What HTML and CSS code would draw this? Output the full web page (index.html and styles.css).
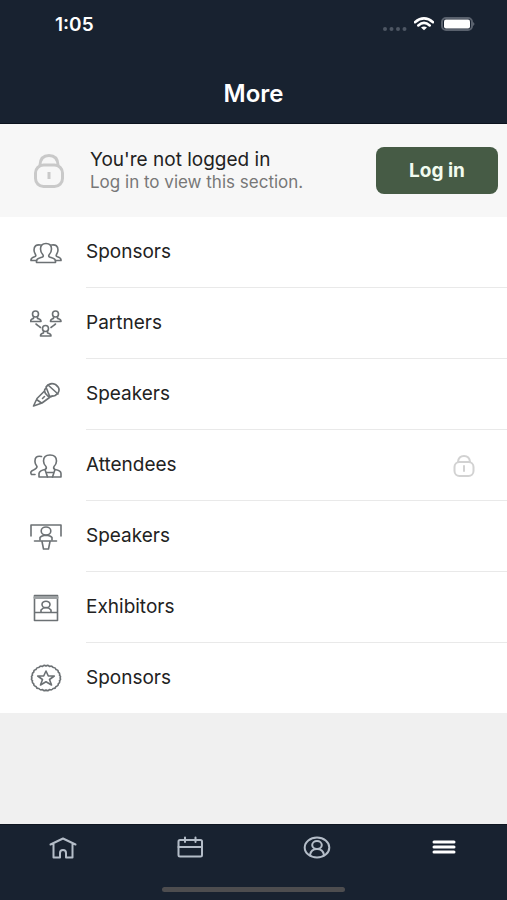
FILE: index.html
```html
<!DOCTYPE html>
<html lang="en">
<head>
    <meta charset="UTF-8">
    <title>More</title>
    <meta name="viewport" content="width=device-width, initial-scale=1.0">
    <link rel="stylesheet" href="styles.css">
</head>
<body>
    <header class="header">
        <div class="status-bar">
            <span class="time">1:05</span>
            <div class="status-icons">
                <svg class="signal" width="24" height="4" viewBox="0 0 24 4">
                    <circle cx="2" cy="2" r="2"/><circle cx="8.500" cy="2" r="2"/><circle cx="15" cy="2" r="2"/><circle cx="21.500" cy="2" r="2"/>
                </svg>
                <svg width="20" height="14" viewBox="0 0 20 14" stroke="#fff" stroke-width="2.600">
                    <path d="M1 5.200Q10-2.400 19 5.200M4.300 8.400Q10 3.500 15.700 8.400"/>
                    <path d="M7 10.500Q10 8.500 13 10.500L10 13.200z" fill="#fff" stroke="none"/>
                </svg>
                <svg width="34" height="14" viewBox="0 0 34 14">
                    <rect x="1" y="1" width="30" height="12" rx="4" stroke="#59616d" stroke-width="2"/>
                    <rect x="3" y="2.500" width="26" height="9" rx="2" fill="#fff"/>
                    <path d="M32 5v4q3-2 0-4" fill="#59616d"/>
                </svg>
            </div>
        </div>
        <h1>More</h1>
    </header>

    <main>
        <!-- Login banner -->
        <section class="login">
            <svg class="lock-icon" width="32" height="36" viewBox="0 0 32 36">
                <path d="M7 12q.500-9.500 9-9.500t9 9.500"/>
                <rect x="2.500" y="12" width="27" height="21.500" rx="8"/>
                <path d="M16 19v7" stroke-linecap="butt"/>
            </svg>
            <div class="login-text">
                <h2>You're not logged in</h2>
                <p>Log in to view this section.</p>
            </div>
            <button type="button" class="login-button">Log in</button>
        </section>

        <!-- Menu -->
        <nav class="menu">
            <a href="#sponsors" class="menu-item">
                <svg class="menu-icon" viewBox="0 0 32 28">
                    <path d="M6.500 23.500q-.500-3.500 3-4.500l3-1q1.500-1 .200-2.500Q10.500 13 10.500 10q0-5.500 5.500-5.500t5.500 5.500q0 3-2.200 5.500-1.300 1.500.200 2.500l3 1q3.500 1 3 4.500z"/>
                    <path d="M10.500 6Q4 5 4 11q0 2 1.500 4.500 1 1.500-1 2.200Q.500 19 1 21.500h5M21.500 6Q28 5 28 11q0 2-1.500 4.500-1 1.500 1 2.200 4 1.300 3.500 3.800h-5"/>
                </svg>
                <span class="menu-label">Sponsors</span>
            </a>
            <a href="#partners" class="menu-item">
                <svg class="menu-icon" viewBox="0 0 32 28">
                    <g id="person">
                        <circle cx="5.500" cy="4" r="3"/>
                        <path d="M3.500 6.500v2Q.500 9 .500 11.500h10.500Q11 9 7.500 8.500v-2"/>
                    </g>
                    <use href="#person" x="20"/>
                    <use href="#person" x="10" y="14.500"/>
                    <path d="M6 14l4.500 3.500M25.500 14L21 17.500" stroke-dasharray="2.500 1"/>
                </svg>
                <span class="menu-label">Partners</span>
            </a>
            <a href="#speakers" class="menu-item">
                <svg class="menu-icon" viewBox="0 0 32 28">
                    <path d="M16 6Q20 1 25.500 3.500 31 7.500 28 12q-3 4-8.500 3z"/>
                    <path d="M18 4l10 9M15.500 7.500q-2 2 0 5t5 3.500l2-1M14.500 10L7 17.500 3.500 25l8.500-3 7.500-5.500M6.500 18.500l5 3.500M12.500 17.500l2-2"/>
                </svg>
                <span class="menu-label">Speakers</span>
            </a>
            <a href="#attendees" class="menu-item">
                <svg class="menu-icon" viewBox="0 0 32 28">
                    <path d="M13.500 9q0-6 6.500-6t6.500 6q0 3-2.500 5.500-1 2 1 3 6 1 6 4V25H9v-3.500q.500-3 6-4 2-1 1-3Q13.500 12 13.500 9z"/>
                    <path d="M15 17.500l2.500 7.500M25 17.500L22.500 25M16 20.500h8"/>
                    <path d="M11.500 4.500Q4.500 3 5 10q0 2 2 4.500 0 2-3.500 3.500-4 1.500-2 4.500H5"/>
                </svg>
                <span class="menu-label">Attendees</span>
                <svg class="lock-icon row-lock" width="22" height="24" viewBox="0 0 22 24">
                    <path d="M5 8q.500-6 6-6t6 6"/>
                    <rect x="1.500" y="8" width="19" height="14" rx="5"/>
                    <path d="M11 12v5"/>
                </svg>
            </a>
            <a href="#sessions" class="menu-item">
                <svg class="menu-icon" viewBox="0 0 32 28">
                    <path d="M1 13V2h30v11M4.500 18h22"/>
                    <ellipse cx="16" cy="8" rx="4.800" ry="4"/>
                    <path d="M10 17v-2.500q1-1.500 4-2h4q3 .500 4 2V17M12 18.500l1.500 7.500h5l1.500-7.500"/>
                </svg>
                <span class="menu-label">Speakers</span>
            </a>
            <a href="#exhibitors" class="menu-item">
                <svg class="menu-icon" viewBox="0 0 32 28">
                    <path d="M4.500 1.500h23v25h-23zM4.500 18.500h23"/>
                    <path d="M5 3.500h22" stroke="#9da1a3" stroke-width="3"/>
                    <ellipse cx="16" cy="10.500" rx="4" ry="3.300"/>
                    <path d="M11 18v-2q2-2.500 5-2.500t5 2.500v2"/>
                </svg>
                <span class="menu-label">Exhibitors</span>
            </a>
            <a href="#sponsor-levels" class="menu-item">
                <svg class="menu-icon" viewBox="0 0 32 28">
                    <path d="M16 2q2-1.500 3.500.500 2.500-1 3.500 1 2.500-.300 3 2 2.500.500 2.300 2.800 2 1 1.200 3 1.800 1.200.500 2.700 1.300 1.500-.500 2.700.800 2-1.200 3 .200 2.300-2.300 2.800-.500 2.300-3 2-1 2-3.500 1-1.500 2-3.500.500-2 1.500-3.500-.500-2.500 1-3.500-1-2.500.300-3-2-2.500-.500-2.300-2.800-2-1-1.200-3-1.800-1.200-.500-2.700-1.300-1.500.500-2.700-.800-2 1.200-3-.200-2.300 2.300-2.800.500-2.300 3-2 1-2 3.500-1Q14 .500 16 2z"/>
                    <path d="M16 7l2.300 5h6l-4.800 3.500 2 5.500-5.500-3.300L10.500 21l2-5.500L7.700 12h6z"/>
                </svg>
                <span class="menu-label">Sponsors</span>
            </a>
        </nav>
    </main>

    <!-- Tab bar -->
    <footer class="tab-bar">
        <nav class="tabs">
            <a href="#home" aria-label="Home">
                <svg width="28" height="24" viewBox="0 0 28 24">
                    <path d="M1.500 8.500L14 2.500l12.500 6M4.500 8v13.500H11V17q0-3 3-3t3 3v4.500h6.500V8"/>
                </svg>
            </a>
            <a href="#schedule" aria-label="Schedule">
                <svg width="28" height="24" viewBox="0 0 28 24">
                    <rect x="2.500" y="4" width="23.500" height="16.500" rx="1.500"/>
                    <path d="M2.500 11H26M9 1.500V6M19.500 1.500V6"/>
                </svg>
            </a>
            <a href="#profile" aria-label="Profile">
                <svg width="28" height="24" viewBox="0 0 28 24">
                    <ellipse cx="14" cy="11.500" rx="12.300" ry="10"/>
                    <ellipse cx="14" cy="9" rx="4.800" ry="4"/>
                    <path d="M7 19q1-6 7-6t7 6"/>
                </svg>
            </a>
            <a href="#more" aria-label="More" class="active">
                <svg width="28" height="24" viewBox="0 0 28 24">
                    <path d="M4 6h20M4 11h20M4 16h20"/>
                </svg>
            </a>
        </nav>
        <div class="home-indicator"></div>
    </footer>
</body>
</html>
```
FILE: styles.css
```css
* {
    margin: 0;
    padding: 0;
    box-sizing: border-box;
}

body {
    min-height: 100vh;
    display: flex;
    flex-direction: column;
    background: #f0f0f0;
    color: #222;
    font-family: Inter, "Liberation Sans", sans-serif;
}

svg {
    display: block;
    flex: none;
    fill: none;
    stroke-linecap: round;
    stroke-linejoin: round;
}

/* Header */
.header {
    background: #182230;
    color: #fff;
    border-bottom: 1px solid #0b121d;
}

.status-bar {
    display: flex;
    justify-content: space-between;
    align-items: center;
    height: 48px;
    padding: 0 32px 0 55px;
}

.time {
    font-size: 19px;
    font-weight: 600;
}

.status-icons {
    display: flex;
    align-items: center;
    gap: 7px;
}

.signal {
    margin-top: 9px;
    fill: #4d5663;
}

h1 {
    padding: 32px 0 15px;
    font-size: 24px;
    font-weight: 600;
    line-height: 28px;
    text-align: center;
}

/* Login banner */
.login {
    display: flex;
    align-items: center;
    padding: 23px 9px 23px 33px;
    background: #f7f7f7;
}

.lock-icon {
    stroke: #c9c9c9;
    stroke-width: 3;
}

.login-text {
    flex: 1;
    margin-left: 25px;
}

h2 {
    font-size: 19px;
    font-weight: 400;
    line-height: 23px;
}

.login-text p {
    color: #777;
    font-size: 17px;
    line-height: 23px;
}

.login-button {
    width: 122px;
    height: 47px;
    border: none;
    border-radius: 8px;
    background: #465b45;
    color: #f2fbef;
    font-family: inherit;
    font-size: 19px;
    font-weight: 700;
    cursor: pointer;
}

/* Menu */
.menu {
    background: #fff;
}

.menu-item {
    position: relative;
    display: flex;
    align-items: center;
    gap: 24px;
    padding-left: 30px;
    color: inherit;
    text-decoration: none;
}

.menu-icon {
    width: 32px;
    height: 28px;
    stroke: #6c7174;
    stroke-width: 1.6;
}

.menu-label {
    flex: 1;
    border-bottom: 1px solid #e9e9e9;
    font-size: 19px;
    line-height: 70px;
}

.menu-item:last-child .menu-label {
    border-bottom: none;
}

.row-lock {
    position: absolute;
    right: 32px;
    stroke: #d2d2d2;
    stroke-width: 2;
}

/* Tab bar */
.tab-bar {
    margin-top: auto;
    padding-bottom: 8px;
    background: #182230;
    border-top: 1px solid #0f1621;
}

.tabs {
    display: grid;
    grid-template-columns: repeat(4, 1fr);
}

.tabs a {
    display: flex;
    justify-content: center;
    padding: 11px 0 27px;
}

.tabs svg {
    stroke: #b4bdc8;
    stroke-width: 2;
}

.tabs .active svg {
    stroke: #fff;
    stroke-width: 3;
}

.home-indicator {
    width: 36%;
    height: 5px;
    margin: 0 auto;
    border-radius: 3px;
    background: #4d4d4f;
}
```
